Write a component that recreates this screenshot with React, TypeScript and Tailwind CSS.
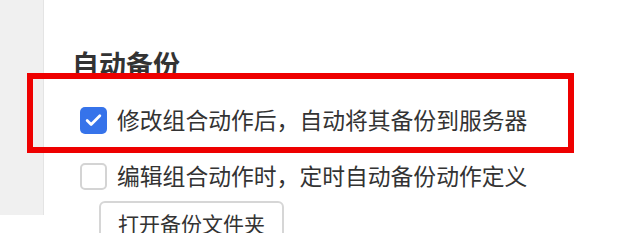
import { Check } from 'lucide-react';

const font = { fontFamily: '"Noto Sans CJK SC", "Noto Sans", sans-serif' };

function CheckRow({ checked, label }: { checked?: boolean; label: string }) {
  return (
    <label className="flex items-center gap-[10px] h-[28px]">
      {checked ? (
        <span className="flex h-[27px] w-[27px] items-center justify-center rounded-[5px] bg-[#3673ea]">
          <Check className="h-[19px] w-[19px] text-white" strokeWidth={3.5} />
        </span>
      ) : (
        <span className="h-[27px] w-[27px] rounded-[5px] border-2 border-[#d4d4d4] bg-white" />
      )}
      <span className="text-[22.8px] leading-none text-[#333]">{label}</span>
    </label>
  );
}

export default function App() {
  return (
    <div className="relative flex h-[233px] w-[629px] overflow-hidden bg-white" style={font}>
      <div className="h-[215px] w-[44px] shrink-0 border-r border-[#e4e4e4] bg-[#f0f0f0]" />

      <main className="flex flex-col pl-[28px] pt-[50px]">
        <h2 className="text-[27px] font-bold leading-none text-[#333]">自动备份</h2>
        <div className="ml-[8px] mt-[29px] flex flex-col gap-[28px]">
          <CheckRow checked label="修改组合动作后，自动将其备份到服务器" />
          <CheckRow label="编辑组合动作时，定时自动备份动作定义" />
        </div>
        <button className="ml-[27px] mt-[11px] w-fit rounded-[6px] border-2 border-[#d6d6d6] bg-white px-[17px] pb-[12px] pt-[10px] text-[21px] leading-none text-[#333]">
          打开备份文件夹
        </button>
      </main>

      {/* red highlight box drawn over the first option */}
      <div className="pointer-events-none absolute left-[27px] top-[73px] h-[80px] w-[547px] border-[6px] border-[#ee0000]" />
    </div>
  );
}
